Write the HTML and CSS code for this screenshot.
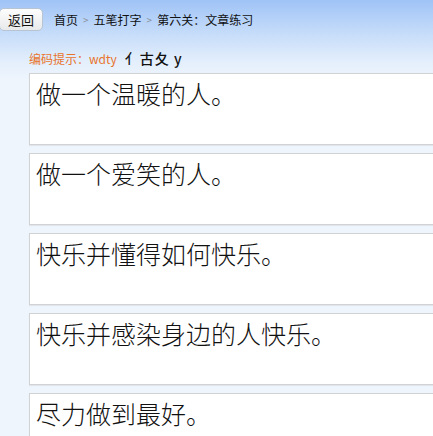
FILE: index.html
```html
<!DOCTYPE html>
<html lang="zh-CN">
<head>
    <meta charset="UTF-8">
    <meta name="viewport" content="width=device-width, initial-scale=1.0">
    <title>第六关：文章练习</title>
    <link rel="stylesheet" href="styles.css">
</head>
<body>
    <div class="header">
        <button class="back-btn">返回</button>
        <div class="crumbs">
            <span>首页</span><span class="sep">&gt;</span><span>五笔打字</span><span class="sep">&gt;</span><span>第六关：文章练习</span>
        </div>
    </div>
    <div class="hint">
        <span class="hint-label">编码提示：wdty</span>
        <span class="hint-code">亻古夂 y</span>
    </div>
    <div class="lines">
        <div class="line">做一个温暖的人。</div>
        <div class="line">做一个爱笑的人。</div>
        <div class="line">快乐并懂得如何快乐。</div>
        <div class="line">快乐并感染身边的人快乐。</div>
        <div class="line">尽力做到最好。</div>
    </div>
</body>
</html>
```

FILE: styles.css
```css
html, body {
    height: 100%;
}

body {
    margin: 0;
    padding: 0;
    overflow: hidden;
    font-family: "Noto Sans CJK SC", "Liberation Sans", sans-serif;
    color: #222;
    background: linear-gradient(#9fc3f6 0, #c2daf9 30px, #e4effc 62px, #eef5fd 80px, #eef5fd 100%);
}

/* Header */
.header {
    display: flex;
    align-items: center;
    gap: 11px;
    padding-top: 8px;
    height: 23px;
}

.back-btn {
    width: 44px;
    height: 23px;
    padding: 0;
    font-family: inherit;
    font-size: 13px;
    color: #111;
    border: 1px solid #b9c4d2;
    border-radius: 5px;
    background: linear-gradient(#fdfdfd, #e8e9eb);
    margin-left: -1px;
}

.crumbs {
    font-size: 12px;
    color: #111;
    display: flex;
    gap: 5px;
}

.crumbs .sep {
    color: #8a9099;
    font-size: 10px;
    line-height: 17px;
}

/* Hint */
.hint {
    display: flex;
    align-items: center;
    gap: 8px;
    margin: 19px 0 0 29px;
    height: 16px;
}

.hint-label {
    color: #e8742c;
    font-size: 12px;
}

.hint-code {
    font-size: 14px;
    font-weight: 500;
    color: #111;
    letter-spacing: 1px;
}

/* Practice lines */
.lines {
    display: flex;
    flex-direction: column;
    gap: 8px;
    margin: 7px 0 0 29px;
}

.line {
    height: 66px;
    background: #fff;
    border: 1px solid #d2d2d2;
    border-right: none;
    box-shadow: 0 1px 1px rgba(0, 0, 0, 0.06);
    font-size: 25px;
    font-weight: 300;
    line-height: 30px;
    padding: 4px 0 0 6px;
    color: #111;
}
```
